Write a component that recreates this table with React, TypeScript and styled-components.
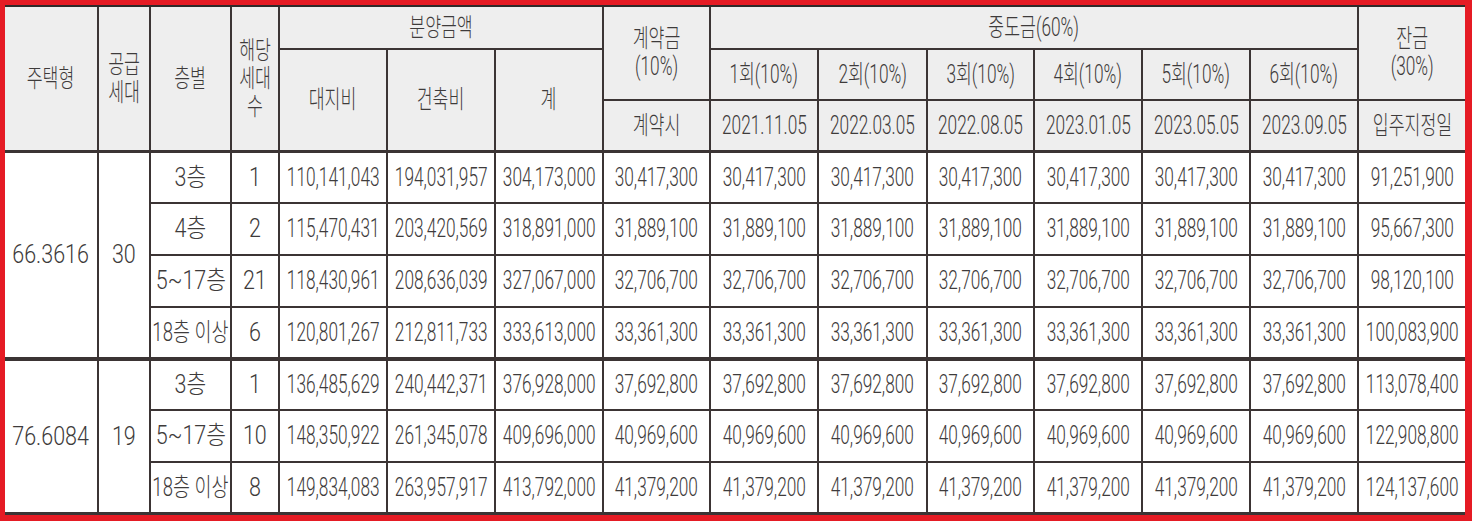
import React from "react";
import styled, { createGlobalStyle } from "styled-components";

const Global = createGlobalStyle`
  html, body { margin: 0; padding: 0; background: #ffffff; }
`;

const Frame = styled.div`
  width: 1472px;
  height: 521px;
  box-sizing: border-box;
  border-style: solid;
  border-color: #e51b24;
  border-width: 5px 7px 6px 5px;
  background: #ffffff;
`;

const Grid = styled.div`
  display: grid;
  grid-template-columns: 92px 50px 79px 46px 106px 106px 106px 105px 106px 107px 105px 106px 106px 106px 106px;
  grid-template-rows: 41px 49px 49px 50px 50px 50px 49px 50px 50px 49px;
  gap: 2px;
  height: 100%;
  box-sizing: border-box;
  background: #3b3434;
  border-top: 2px solid #2f2a2a;
  border-bottom: 3px solid #3b3434;
`;

const Cell = styled.div<{
  $c: number;
  $r: number;
  $cs?: number;
  $rs?: number;
  $head?: boolean;
  $thick?: number;
}>`
  grid-column: ${(p) => p.$c} / span ${(p) => p.$cs ?? 1};
  grid-row: ${(p) => p.$r} / span ${(p) => p.$rs ?? 1};
  display: flex;
  align-items: center;
  justify-content: center;
  box-sizing: border-box;
  background: ${(p) => (p.$head ? "#eeeeee" : "#ffffff")};
  border-top: ${(p) => (p.$thick ? `${p.$thick}px solid #3b3434` : "none")};
  font-family: Roboto, "Noto Sans CJK KR", sans-serif;
  font-size: 25px;
  font-weight: 300;
  line-height: 28px;
  color: #3e3b3b;
  min-width: 0;
`;

const Text = styled.span<{ $sx?: number }>`
  display: inline-block;
  white-space: nowrap;
  text-align: center;
  transform: scaleX(${(p) => p.$sx ?? 0.69});
  transform-origin: center;
`;

type Group = {
  type: string;
  supply: string;
  startRow: number;
  thick: number;
  rows: { floor: string; count: string; land: string; build: string; total: string; pay: string; last: string }[];
};

const groups: Group[] = [
  {
    type: "66.3616",
    supply: "30",
    startRow: 4,
    thick: 1,
    rows: [
      { floor: "3층", count: "1", land: "110,141,043", build: "194,031,957", total: "304,173,000", pay: "30,417,300", last: "91,251,900" },
      { floor: "4층", count: "2", land: "115,470,431", build: "203,420,569", total: "318,891,000", pay: "31,889,100", last: "95,667,300" },
      { floor: "5~17층", count: "21", land: "118,430,961", build: "208,636,039", total: "327,067,000", pay: "32,706,700", last: "98,120,100" },
      { floor: "18층 이상", count: "6", land: "120,801,267", build: "212,811,733", total: "333,613,000", pay: "33,361,300", last: "100,083,900" },
    ],
  },
  {
    type: "76.6084",
    supply: "19",
    startRow: 8,
    thick: 2,
    rows: [
      { floor: "3층", count: "1", land: "136,485,629", build: "240,442,371", total: "376,928,000", pay: "37,692,800", last: "113,078,400" },
      { floor: "5~17층", count: "10", land: "148,350,922", build: "261,345,078", total: "409,696,000", pay: "40,969,600", last: "122,908,800" },
      { floor: "18층 이상", count: "8", land: "149,834,083", build: "263,957,917", total: "413,792,000", pay: "41,379,200", last: "124,137,600" },
    ],
  },
];

const dates = ["2021.11.05", "2022.03.05", "2022.08.05", "2023.01.05", "2023.05.05", "2023.09.05"];

const WIDE = 0.86;

function scaleFor(j: number, v: string): number | undefined {
  if (j === 0) return v.includes(" ") ? 0.74 : WIDE;
  if (j === 1) return WIDE;
  return undefined;
}

export default function App() {
  return (
    <>
      <Global />
      <Frame>
        <Grid>
          <Cell $head $c={1} $r={1} $rs={3}><Text>주택형</Text></Cell>
          <Cell $head $c={2} $r={1} $rs={3}><Text>공급<br />세대</Text></Cell>
          <Cell $head $c={3} $r={1} $rs={3}><Text>층별</Text></Cell>
          <Cell $head $c={4} $r={1} $rs={3}><Text>해당<br />세대<br />수</Text></Cell>
          <Cell $head $c={5} $r={1} $cs={3}><Text>분양금액</Text></Cell>
          <Cell $head $c={8} $r={1} $rs={2}><Text>계약금<br />(10%)</Text></Cell>
          <Cell $head $c={9} $r={1} $cs={6}><Text>중도금(60%)</Text></Cell>
          <Cell $head $c={15} $r={1} $rs={2}><Text>잔금<br />(30%)</Text></Cell>

          <Cell $head $c={5} $r={2} $rs={2}><Text>대지비</Text></Cell>
          <Cell $head $c={6} $r={2} $rs={2}><Text>건축비</Text></Cell>
          <Cell $head $c={7} $r={2} $rs={2}><Text>계</Text></Cell>
          {dates.map((_, i) => (
            <Cell key={`h${i}`} $head $c={9 + i} $r={2}><Text>{`${i + 1}회(10%)`}</Text></Cell>
          ))}

          <Cell $head $c={8} $r={3}><Text>계약시</Text></Cell>
          {dates.map((d, i) => (
            <Cell key={`d${i}`} $head $c={9 + i} $r={3}><Text>{d}</Text></Cell>
          ))}
          <Cell $head $c={15} $r={3}><Text>입주지정일</Text></Cell>

          {groups.map((g) => (
            <React.Fragment key={g.type}>
              <Cell $c={1} $r={g.startRow} $rs={g.rows.length} $thick={g.thick}><Text $sx={WIDE}>{g.type}</Text></Cell>
              <Cell $c={2} $r={g.startRow} $rs={g.rows.length} $thick={g.thick}><Text $sx={WIDE}>{g.supply}</Text></Cell>
              {g.rows.map((row, i) => {
                const r = g.startRow + i;
                const t = i === 0 ? g.thick : 0;
                const values = [row.floor, row.count, row.land, row.build, row.total, row.pay, row.pay, row.pay, row.pay, row.pay, row.pay, row.pay, row.last];
                return values.map((v, j) => (
                  <Cell key={`${r}-${j}`} $c={3 + j} $r={r} $thick={t}><Text $sx={scaleFor(j, v)}>{v}</Text></Cell>
                ));
              })}
            </React.Fragment>
          ))}
        </Grid>
      </Frame>
    </>
  );
}
